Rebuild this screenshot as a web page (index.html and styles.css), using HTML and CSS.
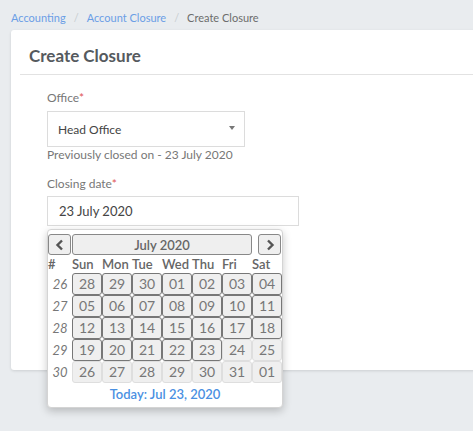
FILE: index.html
```html
<!DOCTYPE html>
<html>
<head>
<meta charset="utf-8">
<link rel="stylesheet" href="styles.css">
</head>
<body>
<nav class="breadcrumb">
  <a class="crumb-link">Accounting</a><span class="sep">/</span><a class="crumb-link">Account Closure</a><span class="sep">/</span><span class="crumb-current">Create Closure</span>
</nav>
<section class="card">
  <div class="card-header"><h1 class="card-title">Create Closure</h1></div>
  <div class="card-body">
    <label class="label">Office<span class="req">*</span></label>
    <div class="select">
      <span class="select-value">Head Office</span>
      <span class="select-arrow"></span>
    </div>
    <div class="hint">Previously closed on - 23 July 2020</div>
    <label class="label label-gap">Closing date<span class="req">*</span></label>
    <div class="date-field">
      <div class="input">23 July 2020</div>
      <div class="picker">
        <div class="nav">
          <button class="nav-btn"><svg width="10" height="12" viewBox="0 0 10 12"><path d="M7 1.5 L2.5 6 L7 10.5" fill="none" stroke="#555" stroke-width="2.4"/></svg></button>
          <button class="nav-title">July 2020</button>
          <button class="nav-btn next"><svg width="10" height="12" viewBox="0 0 10 12"><path d="M3 1.5 L7.5 6 L3 10.5" fill="none" stroke="#555" stroke-width="2.4"/></svg></button>
        </div>
        <div class="grid">
          <div class="hd hash">#</div><div class="hd">Sun</div><div class="hd">Mon</div><div class="hd">Tue</div><div class="hd">Wed</div><div class="hd">Thu</div><div class="hd">Fri</div><div class="hd">Sat</div>

          <div class="wk">26</div><div class="day">28</div><div class="day">29</div><div class="day">30</div><div class="day">01</div><div class="day">02</div><div class="day">03</div><div class="day">04</div>
          <div class="wk">27</div><div class="day">05</div><div class="day">06</div><div class="day">07</div><div class="day">08</div><div class="day">09</div><div class="day">10</div><div class="day">11</div>
          <div class="wk">28</div><div class="day">12</div><div class="day">13</div><div class="day">14</div><div class="day">15</div><div class="day">16</div><div class="day">17</div><div class="day">18</div>
          <div class="wk">29</div><div class="day">19</div><div class="day">20</div><div class="day">21</div><div class="day">22</div><div class="day">23</div><div class="day off">24</div><div class="day off">25</div>
          <div class="wk">30</div><div class="day off">26</div><div class="day off">27</div><div class="day off">28</div><div class="day off">29</div><div class="day off">30</div><div class="day off">31</div><div class="day off">01</div>
        </div>
        <div class="today">Today: Jul 23, 2020</div>
      </div>
    </div>
  </div>
</section>
</body>
</html>
```

FILE: styles.css
```css
html, body {
  margin: 0;
  overflow: hidden;
}
body {
  background: #e9ecef;
  font-family: "Lato", "Noto Sans", sans-serif;
  color: #555;
  width: 473px;
  height: 431px;
}
.breadcrumb {
  padding: 10px 0 0 11px;
  height: 16px;
  line-height: 16px;
  font-size: 11px;
  white-space: nowrap;
}
.crumb-link { color: #6b9ee6; }
.crumb-current { color: #6c6c6c; }
.sep { color: #c8ccd0; margin: 0 8px; }
.card {
  margin: 4px -20px 0 11px;
  background: #fff;
  border-radius: 3px;
  height: 340px;
  box-shadow: 0 1px 3px rgba(0,0,0,0.12);
}
.card-header {
  margin-left: 9px;
  padding: 14px 0 6px 9px;
  border-bottom: 1px solid #e2e2e2;
}
.card-title {
  margin: 0;
  font-size: 17px;
  line-height: 24px;
  font-weight: 700;
  color: #555a5e;
}
.card-body {
  padding: 15px 0 0 36px;
}
.label {
  display: block;
  font-size: 12px;
  line-height: 16px;
  color: #777;
  margin-bottom: 5px;
}
.label-gap { margin-top: 13px; margin-bottom: 4px; }
.req { color: #e05555; }
.select {
  box-sizing: border-box;
  width: 198px;
  height: 36px;
  border: 1px solid #dcdcdc;
  display: flex;
  align-items: center;
  justify-content: space-between;
  padding: 0 9px 0 10px;
}
.select-value { font-size: 12px; color: #444; }
.select-arrow {
  width: 0; height: 0;
  border-left: 3px solid transparent;
  border-right: 3px solid transparent;
  border-top: 4px solid #777;
  margin-top: -2px;
}
.hint {
  font-size: 12px;
  line-height: 16px;
  color: #777;
}
.date-field { position: relative; }
.input {
  box-sizing: border-box;
  width: 252px;
  height: 30px;
  border: 1px solid #dcdcdc;
  padding: 0 11px;
  line-height: 28px;
  font-size: 13px;
  color: #444;
}
.picker {
  position: absolute;
  left: 0;
  top: 33px;
  width: 234px;
  background: #fff;
  border: 1px solid #d4d4d4;
  border-radius: 4px;
  box-shadow: 0 3px 8px rgba(0,0,0,0.22);
  padding: 4px 0 2px;
}
.nav {
  display: flex;
  height: 21px;
  margin-bottom: 1px;
}
.nav-btn, .nav-title {
  box-sizing: border-box;
  margin: 0;
  padding: 0;
  background: #efefef;
  border: 1px solid #888;
  border-radius: 3px;
  height: 21px;
  font-family: inherit;
  display: flex;
  align-items: center;
  justify-content: center;
}
.nav-btn { width: 23px; }
.nav-btn.next { margin-left: 6px; }
.nav-title {
  width: 180px;
  margin-left: 1px;
  font-size: 13px;
  font-weight: 600;
  color: #666;
}
.grid {
  display: grid;
  grid-template-columns: 24px repeat(7, 30px);
  grid-auto-rows: 22px;
  grid-template-rows: 17px;
}
.hd {
  font-size: 13px;
  font-weight: 600;
  color: #666;
  line-height: 17px;
  white-space: nowrap;
}
.wk {
  font-size: 13px;
  font-style: italic;
  color: #777;
  text-align: center;
  line-height: 22px;
}
.day {
  box-sizing: border-box;
  border: 1px solid #777;
  border-radius: 3px;
  background: #efefef;
  text-align: center;
  line-height: 20px;
  font-size: 14px;
  color: #777;
}
.day.off { border-color: #dedede; }
.today {
  text-align: center;
  line-height: 22px;
  font-size: 13px;
  font-weight: 600;
  color: #4a90e2;
}
```
